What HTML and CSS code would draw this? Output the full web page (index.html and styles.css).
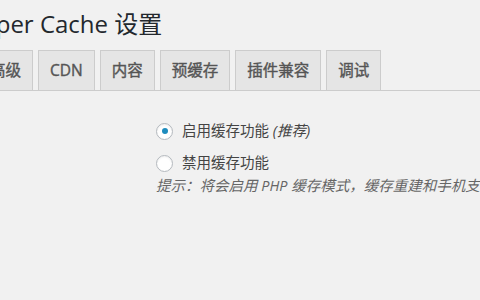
FILE: index.html
```html
<!DOCTYPE html>
<html lang="zh-CN">
<head>
<meta charset="utf-8">
<title>WP Super Cache 设置</title>
<link rel="stylesheet" href="styles.css">
</head>
<body>
<div class="wrap">
  <h1 class="title">WP Super Cache 设置</h1>
  <nav class="tabs">
    <a class="tab">简单</a>
    <a class="tab">高级</a>
    <a class="tab">CDN</a>
    <a class="tab">内容</a>
    <a class="tab">预缓存</a>
    <a class="tab">插件兼容</a>
    <a class="tab">调试</a>
  </nav>
  <div class="form">
    <div class="th"></div>
    <div class="td">
      <label class="opt"><input type="radio" name="cache" class="radio" checked> <span>启用缓存功能 <em>(推荐)</em></span></label>
      <label class="opt"><input type="radio" name="cache" class="radio"> <span>禁用缓存功能</span></label>
      <p class="hint">提示：将会启用 PHP 缓存模式，缓存重建和手机支持。</p>
    </div>
  </div>
</div>
</body>
</html>
```
FILE: styles.css
```css
html, body {
  margin: 0;
  padding: 0;
  background: #f1f1f1;
  overflow: hidden;
}
body {
  width: 480px;
  height: 300px;
  font-family: "Open Sans", "Noto Sans CJK SC", sans-serif;
  color: #444;
}
.wrap {
  margin-left: -78px;
  padding-top: 7px;
}
.title {
  margin: 0 0 0 3px;
  font-size: 24px;
  line-height: 33px;
  font-weight: 400;
  color: #23282d;
  white-space: nowrap;
}
.tabs {
  display: flex;
  gap: 5px;
  margin-top: 10px;
  margin-left: -4px;
  border-bottom: 1px solid #ccc;
  margin-right: -200px;
}
.tab {
  display: block;
  border: 1px solid #ccc;
  border-bottom: 0;
  background: #e5e5e5;
  color: #555;
  font-size: 15.5px;
  font-weight: 400;
  -webkit-text-stroke: 0.4px #555;
  line-height: 27px;
  padding: 6px 11px;
  white-space: nowrap;
}
.form {
  display: grid;
  grid-template-columns: 234px 1fr;
  padding-top: 30px;
}
.td {
  display: flex;
  flex-direction: column;
  gap: 12px;
}
.opt {
  display: flex;
  align-items: center;
  gap: 9px;
  font-size: 14.5px;
  line-height: 20px;
  white-space: nowrap;
}
.opt em {
  font-style: italic;
}
.radio {
  appearance: none;
  -webkit-appearance: none;
  margin: 0;
  width: 17px;
  height: 17px;
  border: 1px solid #b4b9be;
  border-radius: 50%;
  background: #fff;
  box-shadow: inset 0 1px 2px rgba(0, 0, 0, 0.07);
  display: flex;
  align-items: center;
  justify-content: center;
  flex: none;
}
.radio:checked::before {
  content: "";
  width: 6px;
  height: 6px;
  border-radius: 50%;
  background: #1e8cbe;
}
.hint {
  margin: -9px 0 0;
  font-size: 14.5px;
  line-height: 20px;
  font-style: italic;
  color: #666;
  white-space: nowrap;
}
```
